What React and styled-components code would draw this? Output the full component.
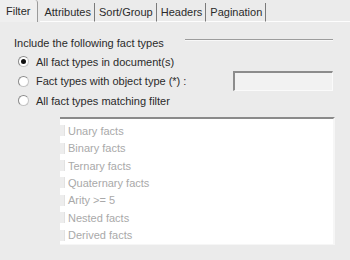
import React from "react";
import styled, { createGlobalStyle } from "styled-components";

const GlobalStyle = createGlobalStyle`
  html, body {
    margin: 0;
    padding: 0;
    background: #ebebeb;
  }
  body {
    font-family: "Liberation Sans", Arial, sans-serif;
    font-size: 11px;
    color: #2a2a2a;
  }
`;

const Window = styled.div`
  width: 350px;
  height: 260px;
  overflow: hidden;
  background: #ebebeb;
`;

const TabBar = styled.div`
  display: flex;
  align-items: flex-end;
  height: 22px;
`;

const Tab = styled.div`
  height: ${(p) => (p.active ? "22px" : "19px")};
  padding: ${(p) => (p.active ? "0 7px 0 6px" : "0 3px 1px 4px")};
  display: flex;
  align-items: center;
  box-sizing: border-box;
  border-right: 1px solid ${(p) => (p.active ? "#9a9a9a" : "#7a7a7a")};
  border-bottom: ${(p) => (p.active ? "none" : "1px solid #fdfdfd")};
  border-top-right-radius: ${(p) => (p.active ? "3px" : "0")};
  background: ${(p) => (p.active ? "#efefef" : "#ebebeb")};
  white-space: nowrap;
  margin-left: ${(p) => (p.gap ? "2px" : "0")};
`;

const TabFill = styled.div`
  flex: 1;
  height: 19px;
  border-bottom: 1px solid #fdfdfd;
  box-sizing: border-box;
`;

const Panel = styled.div`
  padding: 14px 0 0 14px;
`;

const GroupHeader = styled.div`
  display: flex;
  align-items: center;
  height: 14px;
`;

const GroupLine = styled.div`
  margin-left: 21px;
  width: 148px;
  height: 1px;
  background: #9c9c9c;
  border-bottom: 1px solid #f8f8f8;
  margin-top: -6px;
`;

const Options = styled.div`
  display: flex;
  flex-direction: column;
  margin: 2px 0 0 4px;
`;

const OptionRow = styled.label`
  display: flex;
  align-items: center;
  height: ${(p) => p.h || 19}px;
`;

const Radio = styled.span`
  width: 11px;
  height: 11px;
  box-sizing: border-box;
  border-radius: 50%;
  border: 1px solid #c4c4c4;
  border-left-color: #8a8a8a;
  border-top-color: #8a8a8a;
  background: #fff;
  margin-right: 7px;
  display: flex;
  align-items: center;
  justify-content: center;
  &::after {
    content: "";
    width: 5px;
    height: 5px;
    border-radius: 50%;
    background: ${(p) => (p.checked ? "#111" : "transparent")};
  }
`;

const SecondRow = styled.div`
  display: flex;
  align-items: center;
  justify-content: space-between;
  width: 315px;
  height: 20px;
`;

const TypeInput = styled.div`
  width: 100px;
  height: 20px;
  box-sizing: border-box;
  background: #f2f2f2;
  border: 1px solid #fafafa;
  border-top: 2px solid #8c8c8c;
  border-left: 2px solid #8c8c8c;
`;

const FilterList = styled.div`
  margin: 7px 0 0 46px;
  width: 275px;
  height: 128px;
  box-sizing: border-box;
  background: #fff;
  border-top: 2px solid #8a8a8a;
  border-right: 2px solid #f6f6f6;
  border-bottom: 1px solid #f6f6f6;
  padding-top: 3px;
  display: flex;
  flex-direction: column;
`;

const ListRow = styled.div`
  display: flex;
  align-items: center;
  height: 18px;
  color: #a9a9a9;
`;

const Check = styled.span`
  width: 4px;
  height: 11px;
  background: #ededed;
  border-right: 1px solid #e2e2e2;
  margin-right: 3px;
`;

const facts = [
  "Unary facts",
  "Binary facts",
  "Ternary facts",
  "Quaternary facts",
  "Arity >= 5",
  "Nested facts",
  "Derived facts",
];

export default function App() {
  return (
    <Window>
      <GlobalStyle />
      <TabBar>
        <Tab active>Filter</Tab>
        <Tab gap>Attributes</Tab>
        <Tab>Sort/Group</Tab>
        <Tab>Headers</Tab>
        <Tab>Pagination</Tab>
        <TabFill />
      </TabBar>
      <Panel>
        <GroupHeader>
          Include the following fact types
          <GroupLine />
        </GroupHeader>
        <Options>
          <OptionRow>
            <Radio checked />
            All fact types in document(s)
          </OptionRow>
          <SecondRow>
            <OptionRow h={20}>
              <Radio />
              Fact types with object type (*) :
            </OptionRow>
            <TypeInput />
          </SecondRow>
          <OptionRow>
            <Radio />
            All fact types matching filter
          </OptionRow>
        </Options>
        <FilterList>
          {facts.map((f) => (
            <ListRow key={f}>
              <Check />
              {f}
            </ListRow>
          ))}
        </FilterList>
      </Panel>
    </Window>
  );
}
